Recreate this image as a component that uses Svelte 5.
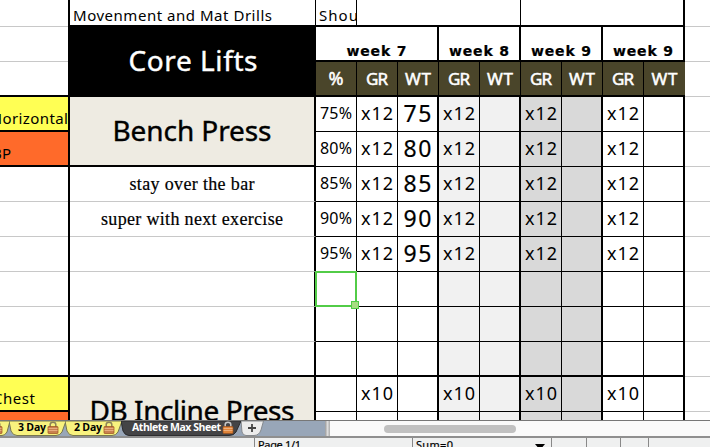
<script>
  // Spreads the letters of a label over a fixed width.
  function fit(node, width) {
    const natural = node.getBoundingClientRect().width;
    const gap = (width - natural) / (node.textContent.length - 1);
    node.style.letterSpacing = gap + 'px';
    node.style.marginRight = -gap + 'px';
  }

  const weeks = [['week 7', 60], ['week 8', 60], ['week 9', 60], ['week 9', 60]];
  const heads = [['%', 15], ['GR', 22], ['WT', 26], ['GR', 22], ['WT', 26], ['GR', 22], ['WT', 26], ['GR', 22], ['WT', 26]];
  const lifts = [
    { pct: '75%', reps: 'x12', wt: '75' },
    { pct: '80%', reps: 'x12', wt: '80' },
    { pct: '85%', reps: 'x12', wt: '85' },
    { pct: '90%', reps: 'x12', wt: '90' },
    { pct: '95%', reps: 'x12', wt: '95' },
    { active: true },
    {},
    {},
    { reps: 'x10' },
    {}
  ];
  const pairs = ['', 'pale', 'grey', ''];
  const tabs = [['3 Day', 28], ['2 Day', 28]];
</script>

{#snippet lock(active)}
  <svg class="lock" width="12" height="13" viewBox="0 0 12 13">
    <path d="M3.200 7V3.600C3.200.5 8.800.5 8.800 3.600V7" fill="none" stroke={active ? '#c9c9c9' : '#8d8458'} stroke-width="1.500" />
    <rect x="1" y="5.500" width="10" height="7" rx=".8" fill={active ? '#e0853a' : '#c9814f'} stroke="#9b501e" stroke-width=".7" />
    <path d="M1.500 7.500h9M1.500 9.500h9" stroke="#f0b98a" stroke-width=".8" />
  </svg>
{/snippet}

<div class="window">
  <div class="sheet">
    <div class="side">
      <div class="r top"></div>
      <div class="r"></div>
      <div class="r thick"></div>
      <div class="r thick yellow"><span use:fit={77}>Horizontal</span></div>
      <div class="r thick orange bp"><span use:fit={19}>BP</span></div>
      <div class="r"></div><div class="r"></div><div class="r"></div><div class="r"></div><div class="r"></div>
      <div class="r thick"></div>
      <div class="r thick yellow chest"><span use:fit={42}>Chest</span></div>
      <div class="r orange"></div>
    </div>

    <div class="names">
      <div class="r top thick drills"><span use:fit={199}>Movenment and Mat Drills</span></div>
      <div class="title core"><span use:fit={129}>Core Lifts</span></div>
      <div class="title bench"><span use:fit={159}>Bench Press</span></div>
      <div class="r note"><span use:fit={125}>stay over the bar</span></div>
      <div class="r note"><span use:fit={182}>super with next exercise</span></div>
      <div class="r"></div><div class="r"></div><div class="r"></div>
      <div class="r thick"></div>
      <div class="title incline"><span use:fit={205}>DB Incline Press</span></div>
    </div>

    <div class="plan">
      <div class="line first">
        <div class="shou"><span use:fit={39}>Shou</span></div>
        <div class="mid"></div>
        <div class="end"></div>
      </div>
      <div class="line weeks">
        {#each weeks as [name, w], i}
          <div class="week" class:wide={i === 0}><span use:fit={w}>{name}</span></div>
        {/each}
      </div>
      <div class="line heads">
        {#each heads as [name, w], i}
          <div class="head" class:percent={i === 0}><span use:fit={w}>{name}</span></div>
        {/each}
      </div>
      {#each lifts as row, i}
        <div class="line lift" class:thick={i === 7}>
          <div class="cell pct">
            {#if row.pct}<span use:fit={32}>{row.pct}</span>{/if}
            {#if row.active}<i class="cursor"></i>{/if}
          </div>
          {#each pairs as tone, p}
            <div class="cell reps {tone}">{#if row.reps}<span use:fit={32}>{row.reps}</span>{/if}</div>
            <div class="cell wt {tone}">{#if p === 0 && row.wt}<span use:fit={28}>{row.wt}</span>{/if}</div>
          {/each}
        </div>
      {/each}
    </div>

    <div class="blank">
      <div class="r top"></div>
      {#each Array(11) as _}<div class="r"></div>{/each}
    </div>
  </div>

  <div class="tabbar">
    <div class="tab zero">
      <svg class="shape" width="14" height="15"><path d="M-5 0H10L7 11Q5 14.500 2 14.500H-5Z" fill="#f8f27e" stroke="#77764f" /></svg>
      {@render lock(false)}
    </div>
    {#each tabs as [name, w]}
      <div class="tab">
        <svg class="shape" width="58" height="15"><path d="M0 0L2 10Q4 14.500 8 14.500H47Q51 14.500 53 11L57 0Z" fill="#f8f27e" stroke="#77764f" /></svg>
        <span use:fit={w}>{name}</span>
        {@render lock(false)}
      </div>
    {/each}
    <div class="tab dark">
      <svg class="shape" width="122" height="15"><path d="M0 0L2 10Q4 14.500 8 14.500H108Q113 14.500 115 11L120 0Z" fill="#444446" stroke="#2c2c2e" /></svg>
      <span use:fit={89}>Athlete Max Sheet</span>
      {@render lock(true)}
    </div>
    <div class="tab add">
      <svg class="shape" width="24" height="15"><path d="M0 0L1 11Q2 14.500 5 14.500H13Q18 14.500 20 9L22.500 0Z" fill="#ececec" stroke="#84888c" /><path d="M7 7H15M11 3V11" stroke="#444" stroke-width="1.800" /></svg>
    </div>
    <div class="fill"></div>
    <div class="split"></div>
    <div class="track"><div class="thumb"></div></div>
  </div>
  <div class="status">
    <div class="s0"></div>
    <div class="s1"><span use:fit={43}>Page 1/1</span></div>
    <div class="s2"><span use:fit={37}>Sum=0</span>
      <svg width="10" height="6" viewBox="0 0 10 6"><path d="M0 0H10L5 6Z" fill="#000" /></svg></div>
    <div class="s3"></div><div class="s4"></div><div class="s5"></div><div class="s6"></div>
  </div>
</div>

<style>
  :global(body) { overflow: hidden; }
  .window { width: 710px; height: 447px; overflow: hidden; background: #fff; color: #000; font: 14px 'Noto Sans', sans-serif; display: flex; flex-direction: column; }
  .window * { box-sizing: border-box; }
  span { white-space: pre; flex: none; }
  .sheet { height: 420px; flex: none; overflow: hidden; display: grid; grid-template-columns: 70px 246px 369px 25px; }
  .r { height: 35px; border-bottom: 1px solid #c8c8c8; display: flex; }
  .top { height: 27px; }
  .thick { border-bottom: 2px solid #000; }
  .side { border-right: 2px solid #000; overflow: hidden; }
  .side .r { justify-content: flex-end; font-size: 15px; line-height: 42px; }
  .yellow { background: #ffff54; }
  .orange { background: #ff6a2a; }
  .side .bp { padding-right: 57px; }
  .side .chest { padding-right: 33px; }
  .names { min-width: 0; }
  .names > .r:not(.top), .bench, .incline { border-right: 2px solid #000; }
  .drills { padding-left: 3px; font-size: 15px; line-height: 31px; border-right: 1px solid #000; }
  .title { height: 70px; display: flex; justify-content: center; font: 28px/70px 'Noto Sans', sans-serif; -webkit-text-stroke: .4px; }
  .core { background: #000; color: #fff; line-height: 66px; }
  .bench { background: #eeebe2; border-bottom: 2px solid #000; line-height: 66px; }
  .incline { background: #eeebe2; line-height: 66px; }
  .note { justify-content: center; font: 18px/35px 'Liberation Serif', serif; -webkit-text-stroke: .2px; }
  .line { display: flex; height: 35px; }
  .first { height: 27px; border-bottom: 2px solid #000; }
  .shou { width: 41px; padding-left: 3px; overflow: hidden; font-size: 15px; line-height: 31px; border-right: 1px solid #000; }
  .mid { width: 164px; border-right: 1px solid #000; }
  .end { width: 164px; border-right: 2px solid #000; }
  .weeks { border-bottom: 2px solid #000; }
  .week { width: 82px; border-right: 2px solid #000; display: flex; justify-content: center; font: bold 14px/49px 'DejaVu Sans', sans-serif; -webkit-text-stroke: .2px; }
  .week.wide { width: 123px; }
  .heads { background: #4a452a; color: #fff; border-bottom: 2px solid #000; }
  .head { width: 41px; border-right: 1px solid #000; display: flex; justify-content: center; font: 17px/33px 'Noto Sans', sans-serif; -webkit-text-stroke: .5px; }
  .percent { font-size: 18px; }
  .head:last-child { border: 0; }
  .cell { width: 41px; border-right: 1px solid #000; border-bottom: 1px solid #000; display: flex; justify-content: center; position: relative; font: 18px/33px 'Noto Sans', sans-serif; }
  .wt { border-right-width: 2px; font-size: 23px; -webkit-text-stroke: .2px; }
  .pct { font-size: 16px; }
  .line.thick { border: 0; }
  .line.thick .cell { border-bottom-width: 2px; }
  .pale { background: #f1f1f1; }
  .grey { background: #d9d9d9; }
  .cursor { position: absolute; left: -1px; top: -1px; width: 42px; height: 36px; border: 2px solid #52cc47; z-index: 1; }
  .cursor::after { content: ''; position: absolute; right: -4px; bottom: -4px; width: 6px; height: 6px; background: #a9dc83; border: 1px solid #52cc47; }

  .tabbar { height: 16px; flex: none; display: flex; background: #98a6b8; border-top: 1px solid #777; font: bold 10.5px/13px 'Open Sans', sans-serif; }
  .tab { position: relative; width: 56px; height: 15px; display: flex; padding-left: 9px; gap: 1px; }
  .shape { position: absolute; left: 0; top: 0; }
  .tab span, .lock { position: relative; flex: none; }
  .zero { width: 9px; padding: 0; }
  .zero .lock { margin-left: -9px; }
  .dark { width: 120px; padding-left: 11px; color: #fff; }
  .add { width: 23px; }
  .fill { width: 61px; }
  .split { width: 5px; background: linear-gradient(90deg, #999, #ddd, #aaa); }
  .track { flex: 1; background: #fafafa; padding: 4px 0 0 54px; }
  .thumb { width: 132px; height: 8px; border-radius: 4px; background: #c1c1c1; }
  .status { height: 11px; flex: none; border-top: 2px solid #8f8f8f; display: flex; background: #eff0f0; font: 11px/14px 'Noto Sans', sans-serif; -webkit-text-stroke: .2px; }
  .status > div { border-right: 1px solid #888; display: flex; overflow: hidden; flex: none; }
  .s0 { width: 255px; }
  .s1 { width: 158px; padding-left: 3px; }
  .s2 { width: 139px; padding: 0 6px 0 3px; justify-content: space-between; }
  .s2 svg { margin-top: 6px; }
  .s3 { width: 35px; }
  .s4 { width: 34px; }
  .s5 { width: 28px; }
  .status > .s6 { width: 61px; border: 0; }
</style>
